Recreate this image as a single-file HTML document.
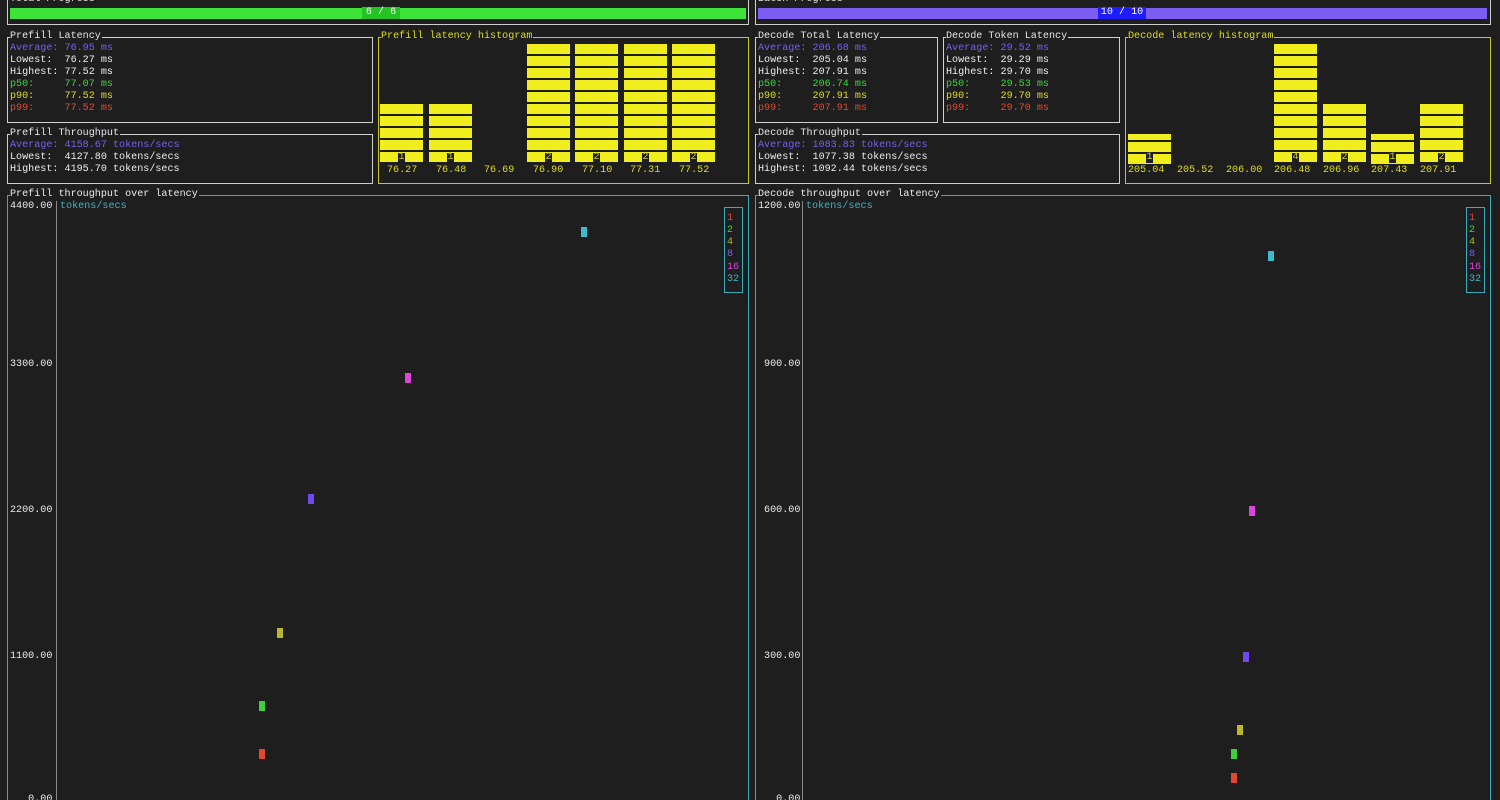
<!DOCTYPE html>
<html><head><meta charset="utf-8"><style>
html,body{margin:0;padding:0;background:#1e1e1e;width:1500px;height:800px;overflow:hidden}
body{position:relative;font-family:"Liberation Mono","DejaVu Sans Mono",monospace;font-size:10.1px;color:#e6e6e6}
.a{position:absolute;white-space:pre;line-height:12px}
.box{position:absolute;border:1px solid #cfcfcf;box-sizing:border-box}
.y{border-color:#c9c51e}
.c{border-color:#3ba9b8}
.t{position:absolute;top:-7px;left:2px;background:#1e1e1e;white-space:pre;line-height:12px;padding:0 1px 0 0}
.pu{color:#7a5cf2}.gr{color:#3fd33f}.ye{color:#dcdc1e}.re{color:#e2482e}.wh{color:#ececec}.cy{color:#3bb6c6}.ma{color:#d946d9}.ol{color:#b8b82a}
.bar{position:absolute;width:43px;background:repeating-linear-gradient(to bottom,#f0ee1c 0 10px,transparent 10px 12px)}
.cnt{position:absolute;width:7px;height:10px;background:#1e1e1e;color:#cfcb3a;font-size:10px;line-height:10px;text-align:center}
.pt{position:absolute;width:6px;height:10px}
</style></head><body>

<!-- progress -->
<div class="box" style="left:7px;top:-4px;width:742px;height:29px"><div class="t" style="top:-3px">Total Progress</div></div>
<div class="a" style="left:10px;top:8px;width:736px;height:11px;background:#3ee33a"></div>
<div class="a" style="left:362px;top:7px;width:38px;height:12px;background:#22c322;color:#fff;text-align:center">6 / 6</div>

<div class="box" style="left:755px;top:-4px;width:736px;height:29px"><div class="t" style="top:-3px">Batch Progress</div></div>
<div class="a" style="left:758px;top:8px;width:729px;height:11px;background:#7b5df2"></div>
<div class="a" style="left:1098px;top:7px;width:48px;height:12px;background:#1d1dff;color:#fff;text-align:center">10 / 10</div>

<!-- prefill latency -->
<div class="box" style="left:7px;top:37px;width:366px;height:86px"><div class="t">Prefill Latency</div></div>
<div class="a pu" style="left:10px;top:43px">Average: 76.95 ms</div>
<div class="a wh" style="left:10px;top:55px">Lowest:  76.27 ms</div>
<div class="a wh" style="left:10px;top:67px">Highest: 77.52 ms</div>
<div class="a gr" style="left:10px;top:79px">p50:     77.07 ms</div>
<div class="a ye" style="left:10px;top:91px">p90:     77.52 ms</div>
<div class="a re" style="left:10px;top:103px">p99:     77.52 ms</div>

<div class="box" style="left:7px;top:134px;width:366px;height:50px"><div class="t">Prefill Throughput</div></div>
<div class="a pu" style="left:10px;top:140px">Average: 4158.67 tokens/secs</div>
<div class="a wh" style="left:10px;top:152px">Lowest:  4127.80 tokens/secs</div>
<div class="a wh" style="left:10px;top:164px">Highest: 4195.70 tokens/secs</div>

<!-- prefill histogram -->
<div class="box y" style="left:378px;top:37px;width:371px;height:147px"><div class="t ye">Prefill latency histogram</div></div>
<div class="bar" style="left:380px;top:104px;height:58px"></div>
<div class="bar" style="left:429px;top:104px;height:58px"></div>
<div class="bar" style="left:527px;top:44px;height:118px"></div>
<div class="bar" style="left:575px;top:44px;height:118px"></div>
<div class="bar" style="left:624px;top:44px;height:118px"></div>
<div class="bar" style="left:672px;top:44px;height:118px"></div>
<div class="cnt" style="left:398px;top:153px">1</div>
<div class="cnt" style="left:447px;top:153px">1</div>
<div class="cnt" style="left:545px;top:153px">2</div>
<div class="cnt" style="left:593px;top:153px">2</div>
<div class="cnt" style="left:642px;top:153px">2</div>
<div class="cnt" style="left:690px;top:153px">2</div>
<div class="a ye" style="left:387px;top:165px">76.27</div>
<div class="a ye" style="left:436px;top:165px">76.48</div>
<div class="a ye" style="left:484px;top:165px">76.69</div>
<div class="a ye" style="left:533px;top:165px">76.90</div>
<div class="a ye" style="left:582px;top:165px">77.10</div>
<div class="a ye" style="left:630px;top:165px">77.31</div>
<div class="a ye" style="left:679px;top:165px">77.52</div>

<!-- decode total latency -->
<div class="box" style="left:755px;top:37px;width:183px;height:86px"><div class="t">Decode Total Latency</div></div>
<div class="a pu" style="left:758px;top:43px">Average: 206.68 ms</div>
<div class="a wh" style="left:758px;top:55px">Lowest:  205.04 ms</div>
<div class="a wh" style="left:758px;top:67px">Highest: 207.91 ms</div>
<div class="a gr" style="left:758px;top:79px">p50:     206.74 ms</div>
<div class="a ye" style="left:758px;top:91px">p90:     207.91 ms</div>
<div class="a re" style="left:758px;top:103px">p99:     207.91 ms</div>

<div class="box" style="left:943px;top:37px;width:177px;height:86px"><div class="t">Decode Token Latency</div></div>
<div class="a pu" style="left:946px;top:43px">Average: 29.52 ms</div>
<div class="a wh" style="left:946px;top:55px">Lowest:  29.29 ms</div>
<div class="a wh" style="left:946px;top:67px">Highest: 29.70 ms</div>
<div class="a gr" style="left:946px;top:79px">p50:     29.53 ms</div>
<div class="a ye" style="left:946px;top:91px">p90:     29.70 ms</div>
<div class="a re" style="left:946px;top:103px">p99:     29.70 ms</div>

<div class="box" style="left:755px;top:134px;width:365px;height:50px"><div class="t">Decode Throughput</div></div>
<div class="a pu" style="left:758px;top:140px">Average: 1083.83 tokens/secs</div>
<div class="a wh" style="left:758px;top:152px">Lowest:  1077.38 tokens/secs</div>
<div class="a wh" style="left:758px;top:164px">Highest: 1092.44 tokens/secs</div>

<!-- decode histogram -->
<div class="box y" style="left:1125px;top:37px;width:366px;height:147px"><div class="t ye">Decode latency histogram</div></div>
<div class="a" style="left:1128px;top:134px;width:43px;height:6px;background:#f0ee1c"></div>
<div class="bar" style="left:1128px;top:142px;height:22px"></div>
<div class="bar" style="left:1274px;top:44px;height:118px"></div>
<div class="bar" style="left:1323px;top:104px;height:58px"></div>
<div class="a" style="left:1371px;top:134px;width:43px;height:6px;background:#f0ee1c"></div>
<div class="bar" style="left:1371px;top:142px;height:22px"></div>
<div class="bar" style="left:1420px;top:104px;height:58px"></div>
<div class="cnt" style="left:1146px;top:153px">1</div>
<div class="cnt" style="left:1292px;top:153px">4</div>
<div class="cnt" style="left:1341px;top:153px">2</div>
<div class="cnt" style="left:1389px;top:153px">1</div>
<div class="cnt" style="left:1438px;top:153px">2</div>
<div class="a ye" style="left:1128px;top:165px">205.04</div>
<div class="a ye" style="left:1177px;top:165px">205.52</div>
<div class="a ye" style="left:1226px;top:165px">206.00</div>
<div class="a ye" style="left:1274px;top:165px">206.48</div>
<div class="a ye" style="left:1323px;top:165px">206.96</div>
<div class="a ye" style="left:1371px;top:165px">207.43</div>
<div class="a ye" style="left:1420px;top:165px">207.91</div>

<!-- prefill chart -->
<div class="box c" style="left:7px;top:195px;width:742px;height:620px"><div class="t wh">Prefill throughput over latency</div></div>
<div class="a" style="left:56px;top:201px;width:1px;height:600px;background:#8a8a8a"></div>
<div class="a wh" style="left:10px;top:201px">4400.00</div>
<div class="a wh" style="left:10px;top:359px">3300.00</div>
<div class="a wh" style="left:10px;top:505px">2200.00</div>
<div class="a wh" style="left:10px;top:651px">1100.00</div>
<div class="a wh" style="left:10px;top:794px">   0.00</div>
<div class="a cy" style="left:60px;top:201px">tokens/secs</div>
<div class="box c" style="left:724px;top:207px;width:19px;height:86px"></div>
<div class="a re" style="left:727px;top:213px">1</div>
<div class="a gr" style="left:727px;top:225px">2</div>
<div class="a ol" style="left:727px;top:237px">4</div>
<div class="a pu" style="left:727px;top:249px">8</div>
<div class="a ma" style="left:727px;top:262px">16</div>
<div class="a cy" style="left:727px;top:274px">32</div>
<div class="pt" style="left:581px;top:227px;background:#3bbccc"></div>
<div class="pt" style="left:405px;top:373px;background:#dd44dd"></div>
<div class="pt" style="left:308px;top:494px;background:#7048f0"></div>
<div class="pt" style="left:277px;top:628px;background:#b8b82a"></div>
<div class="pt" style="left:259px;top:701px;background:#3fcf3f"></div>
<div class="pt" style="left:259px;top:749px;background:#e2482e"></div>

<!-- decode chart -->
<div class="box c" style="left:755px;top:195px;width:736px;height:620px"><div class="t wh">Decode throughput over latency</div></div>
<div class="a" style="left:802px;top:201px;width:1px;height:600px;background:#8a8a8a"></div>
<div class="a wh" style="left:758px;top:201px">1200.00</div>
<div class="a wh" style="left:758px;top:359px"> 900.00</div>
<div class="a wh" style="left:758px;top:505px"> 600.00</div>
<div class="a wh" style="left:758px;top:651px"> 300.00</div>
<div class="a wh" style="left:758px;top:794px">   0.00</div>
<div class="a cy" style="left:806px;top:201px">tokens/secs</div>
<div class="box c" style="left:1466px;top:207px;width:19px;height:86px"></div>
<div class="a re" style="left:1469px;top:213px">1</div>
<div class="a gr" style="left:1469px;top:225px">2</div>
<div class="a ol" style="left:1469px;top:237px">4</div>
<div class="a pu" style="left:1469px;top:249px">8</div>
<div class="a ma" style="left:1469px;top:262px">16</div>
<div class="a cy" style="left:1469px;top:274px">32</div>
<div class="pt" style="left:1268px;top:251px;background:#3bbccc"></div>
<div class="pt" style="left:1249px;top:506px;background:#dd44dd"></div>
<div class="pt" style="left:1243px;top:652px;background:#7048f0"></div>
<div class="pt" style="left:1237px;top:725px;background:#b8b82a"></div>
<div class="pt" style="left:1231px;top:749px;background:#3fcf3f"></div>
<div class="pt" style="left:1231px;top:773px;background:#e2482e"></div>

</body></html>
